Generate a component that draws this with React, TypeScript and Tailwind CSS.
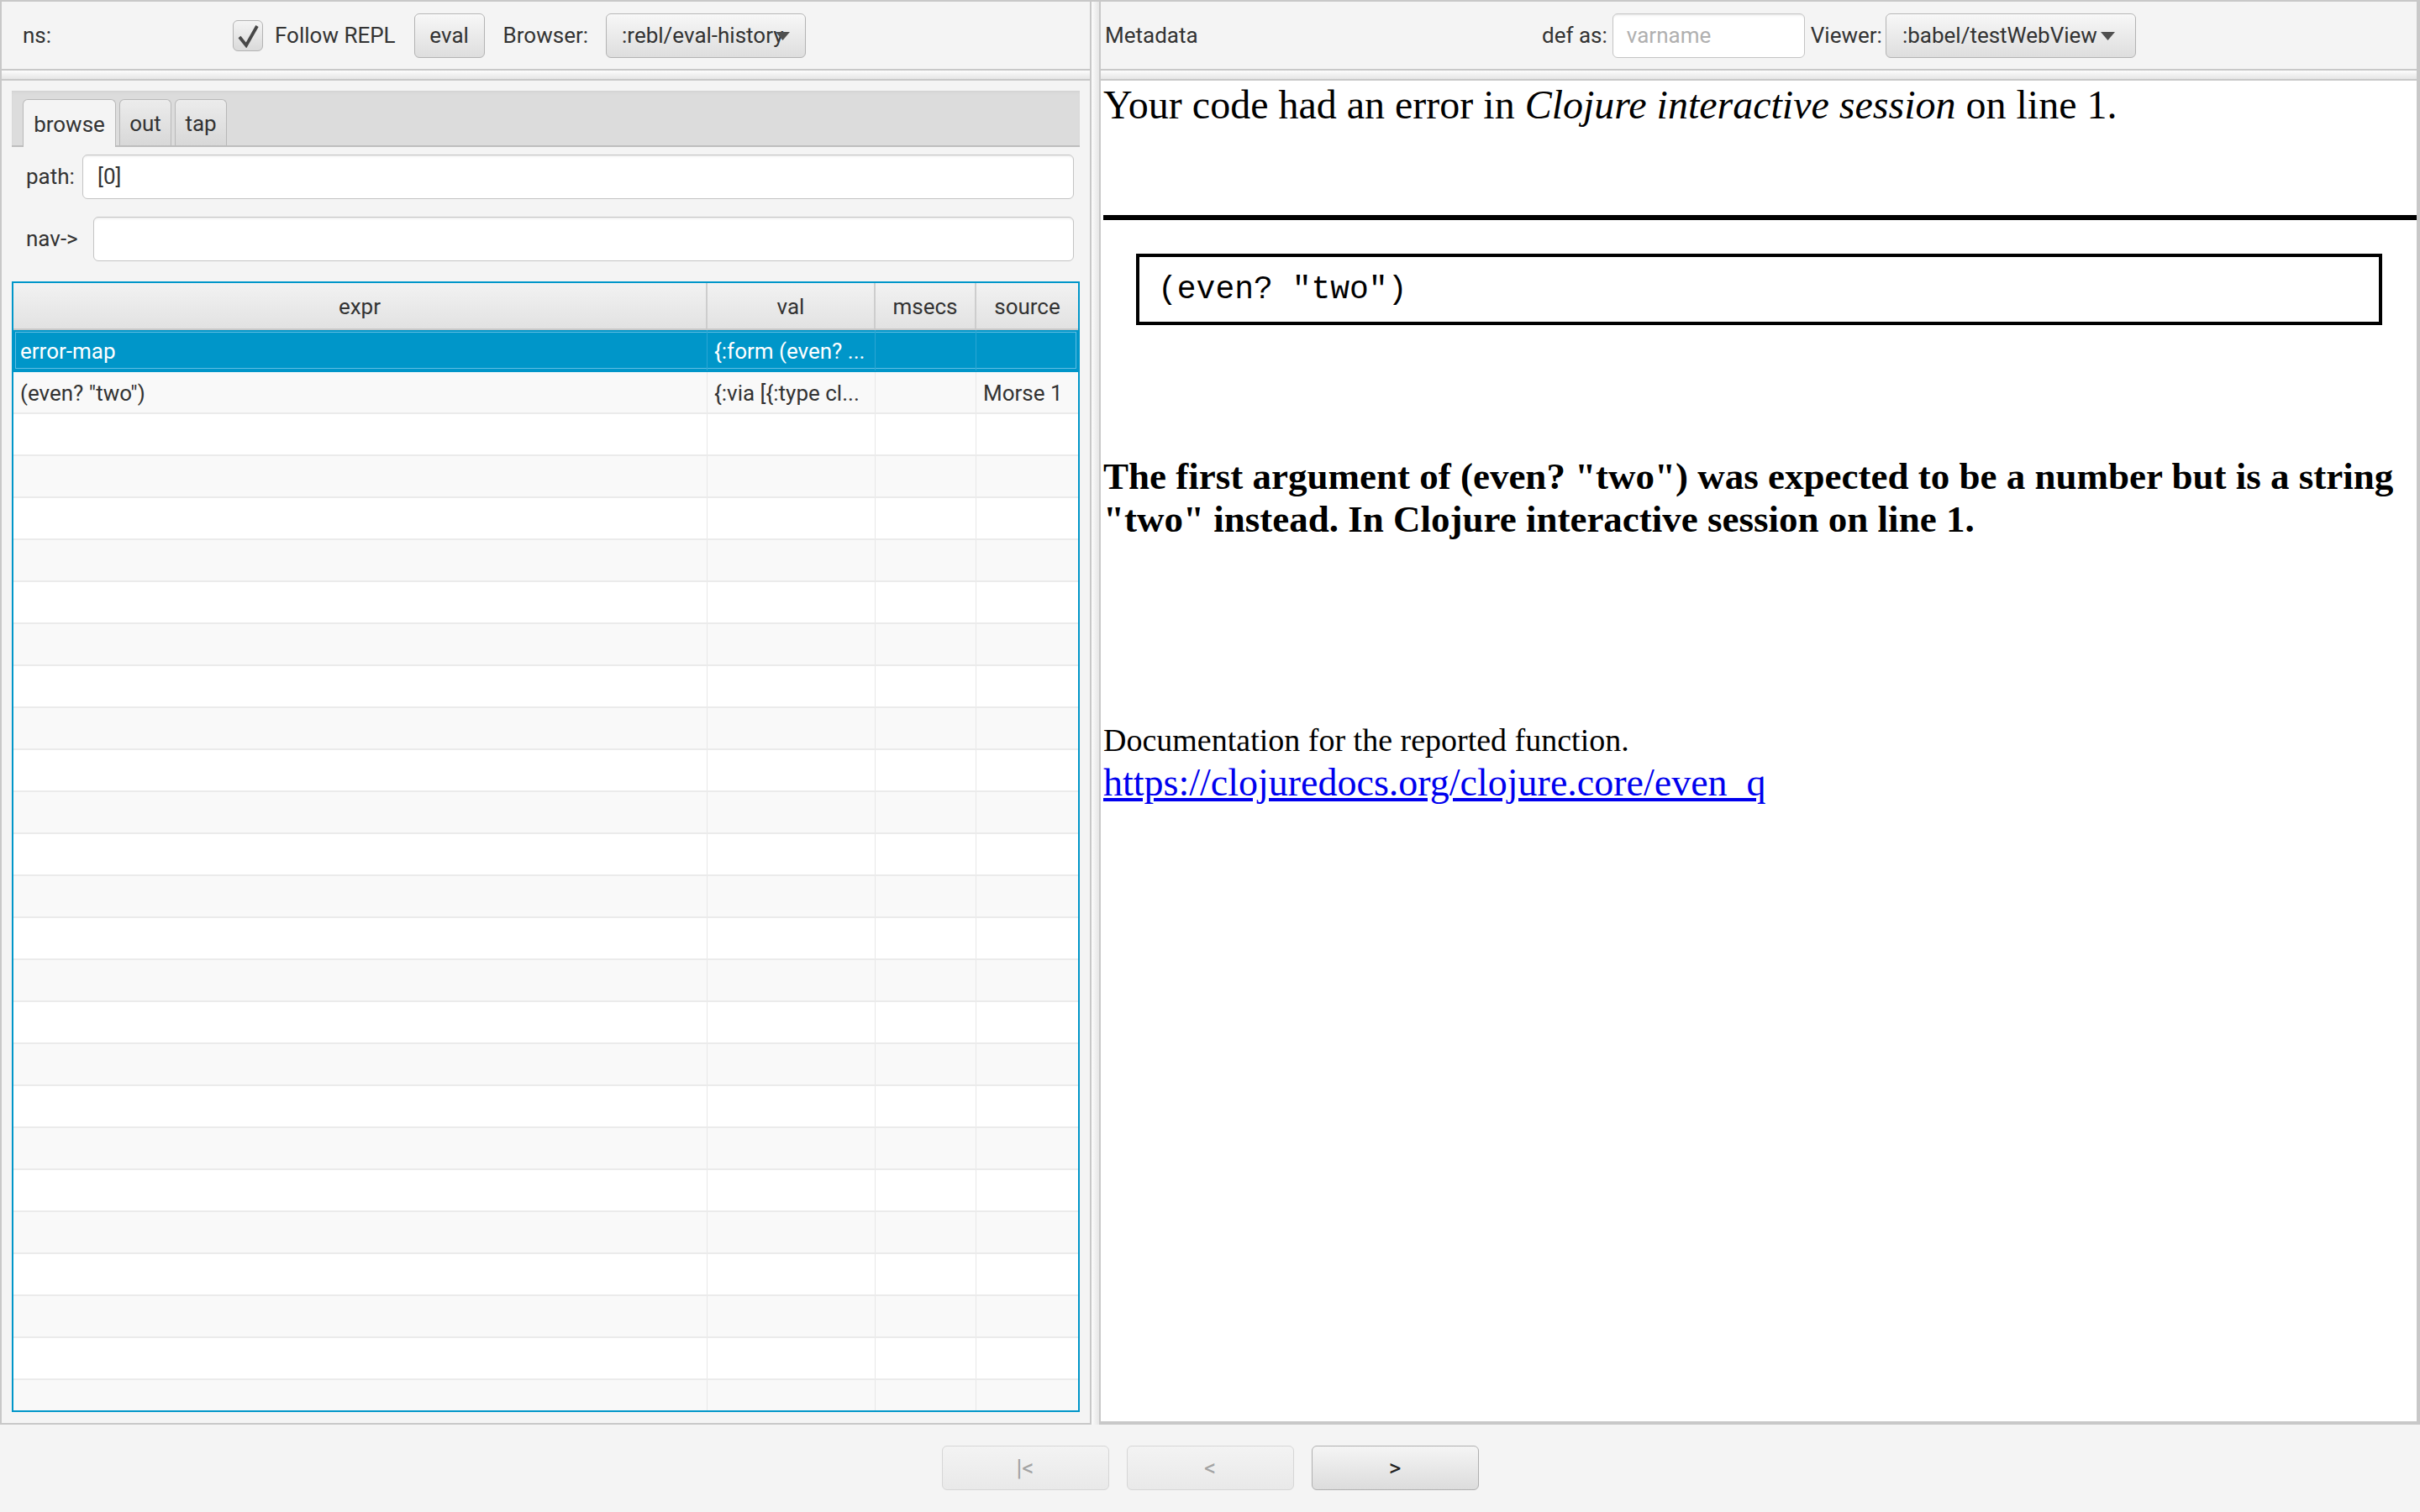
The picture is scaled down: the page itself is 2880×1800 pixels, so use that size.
import React from 'react';

const btnCls =
  'h-[53px] rounded-[6px] border-[1.5px] border-[#b3b3b3] bg-gradient-to-b from-[#f7f7f7] to-[#dedede] shadow-[inset_0_1px_0_#ffffff] flex items-center text-[#333]';

function Arrow() {
  return (
    <svg width="17" height="10" viewBox="0 0 17 10" className="block">
      <polygon points="0,0 17,0 8.5,10" fill="#505050" />
    </svg>
  );
}

function Toolbar() {
  return (
    <div className="h-[80px] flex items-center shrink-0 text-[26px]">
      <span className="pl-[25px] w-[275px]">ns:</span>
      <div className="w-[36px] h-[37px] rounded-[6px] border-[1.5px] border-[#b3b3b3] bg-gradient-to-b from-[#f4f4f4] to-[#dadada] flex items-center justify-center">
        <svg width="30" height="30" viewBox="0 0 30 30">
          <path d="M5 17 L13 27 L26 4" fill="none" stroke="#474747" strokeWidth="3.8" strokeLinejoin="miter" strokeLinecap="butt" />
        </svg>
      </div>
      <span className="ml-[14px]">Follow REPL</span>
      <div className={btnCls + ' ml-[22px] w-[84px] justify-center'}>eval</div>
      <span className="ml-[22px]">Browser:</span>
      <div className={btnCls + ' relative ml-[21px] w-[238px] pl-[18px] overflow-hidden whitespace-nowrap'}>
        <span>:rebl/eval-history</span>
        <span className="absolute right-[18px] top-[21px]">
          <Arrow />
        </span>
      </div>
    </div>
  );
}

function Strip() {
  return (
    <div className="h-[14px] shrink-0 border-y-2 border-[#c8c8c8] bg-gradient-to-b from-[#fcfcfc] to-[#e6e6e6]" />
  );
}

type Row = { expr: string; val: string; msecs: string; source: string };

const data: Row[] = [
  { expr: 'error-map', val: '{:form (even? ...', msecs: '', source: '' },
  { expr: '(even? "two")', val: '{:via [{:type cl...', msecs: '', source: 'Morse 1' },
];

const cols = 'grid grid-cols-[826px_200px_120px_1fr]';

function Table() {
  const rows: Row[] = [];
  for (let i = 0; i < 26; i++) {
    rows.push(data[i] ?? { expr: '', val: '', msecs: '', source: '' });
  }
  return (
    <div className="flex-1 min-h-0 border-2 border-[#0096c9] bg-white flex flex-col overflow-hidden">
      <div className={cols + ' h-[56px] shrink-0 border-b-2 border-[#c8c8c8] bg-gradient-to-b from-[#f2f2f2] to-[#e2e2e2]'}>
        {['expr', 'val', 'msecs', 'source'].map((h, i) => (
          <div
            key={h}
            className={
              'flex items-center justify-center pt-[2px] text-[26px] text-[#333] ' +
              (i < 3 ? 'border-r-2 border-[#cdcdcd]' : '')
            }
          >
            {h}
          </div>
        ))}
      </div>
      <div className="flex-1 min-h-0 overflow-hidden">
        {rows.map((r, i) => {
          const sel = i === 0;
          const bg = sel ? 'bg-[#0096c9] text-white shadow-[inset_0_0_0_2px_#0096c9,inset_0_0_0_3px_#5fbde3]' : i % 2 === 1 ? 'bg-[#f9f9f9] text-[#333]' : 'bg-white text-[#333]';
          const line = sel ? 'border-[#2aa6d4]' : 'border-[#e8e8e8]';
          return (
            <div key={i} className={cols + ' h-[50px] border-b-2 ' + (sel ? 'border-[#0096c9] ' : 'border-[#ebebeb] ') + bg}>
              <div className={'flex items-center pt-[2px] px-[8px] whitespace-nowrap overflow-hidden text-[26px] border-r ' + line}>{r.expr}</div>
              <div className={'flex items-center pt-[2px] px-[8px] whitespace-nowrap overflow-hidden text-[26px] border-r ' + line}>{r.val}</div>
              <div className={'flex items-center pt-[2px] px-[8px] whitespace-nowrap overflow-hidden text-[26px] border-r ' + line}>{r.msecs}</div>
              <div className="flex items-center pt-[2px] px-[8px] whitespace-nowrap overflow-hidden text-[26px]">{r.source}</div>
            </div>
          );
        })}
      </div>
    </div>
  );
}

function Input({ value, placeholder, className }: { value?: string; placeholder?: string; className?: string }) {
  return (
    <div
      className={
        'h-[53px] rounded-[6px] border-[1.5px] border-[#c4c4c4] bg-white shadow-[inset_0_3px_3px_-2px_#e6e6e6] flex items-center text-[26px] ' +
        (className ?? '')
      }
    >
      {value ? <span className="text-[#333]">{value}</span> : <span className="text-[#b0b0b0]">{placeholder}</span>}
    </div>
  );
}

function LeftPane() {
  return (
    <div className="w-[1295px] shrink-0 flex flex-col border-b-2 border-[#c8c8c8]">
      <Toolbar />
      <Strip />
      <div className="flex-1 min-h-0 flex flex-col pl-[12px] pr-[12px] pt-[12px] pb-[13px]">
        <div className="h-[67px] shrink-0 bg-[#dcdcdc] shadow-[inset_0_3px_4px_-2px_#cfcfcf] flex items-end pl-[13px] border-b-2 border-[#bdbdbd] text-[26px]">
          <div className="w-[111px] h-[57px] -mb-[2px] pt-[2px] rounded-t-[6px] border-[1.5px] border-b-0 border-[#b8b8b8] bg-[#f4f4f4] flex items-center justify-center">
            browse
          </div>
          <div className="ml-[4px] w-[62px] h-[55px] pt-[2px] rounded-t-[6px] border-[1.5px] border-b-0 border-[#b8b8b8] bg-gradient-to-b from-[#ececec] to-[#d8d8d8] flex items-center justify-center">
            out
          </div>
          <div className="ml-[4px] w-[62px] h-[55px] pt-[2px] rounded-t-[6px] border-[1.5px] border-b-0 border-[#b8b8b8] bg-gradient-to-b from-[#ececec] to-[#d8d8d8] flex items-center justify-center">
            tap
          </div>
        </div>
        <div className="mt-[9px] h-[53px] shrink-0 flex items-center pr-[7px] text-[26px]">
          <span className="pl-[17px] w-[84px]">path:</span>
          <Input value="[0]" className="flex-1 pl-[17px]" />
        </div>
        <div className="mt-[21px] h-[53px] shrink-0 flex items-center pr-[7px] text-[26px]">
          <span className="pl-[17px] w-[97px]">nav-&gt;</span>
          <Input className="flex-1" />
        </div>
        <div className="mt-[24px] flex-1 min-h-0 flex">
          <Table />
        </div>
      </div>
    </div>
  );
}

function RightPane() {
  return (
    <div className="flex-1 min-w-0 flex flex-col border-r-4 border-b-4 border-[#c8c8c8]">
      <div className="h-[80px] flex items-center shrink-0 text-[26px]">
        <span className="pl-[5px] w-[525px]">Metadata</span>
        <span>def as:</span>
        <Input placeholder="varname" className="ml-[6px] w-[229px] pl-[16px]" />
        <span className="ml-[7px]">Viewer:</span>
        <div className={btnCls + ' relative ml-[4px] w-[298px] pl-[19px] whitespace-nowrap overflow-hidden'}>
          <span>:babel/testWebView</span>
          <span className="absolute right-[24px] top-[21px]">
            <Arrow />
          </span>
        </div>
      </div>
      <Strip />
      <div className="flex-1 min-h-0 bg-white overflow-hidden pl-[3px] text-black [font-family:'Liberation_Serif',serif]">
        <p className="text-[48px] leading-[57px] whitespace-nowrap">
          Your code had an error in <i>Clojure interactive session</i> on line 1.
        </p>
        <div className="mt-[103px] h-[6px] bg-black" />
        <div className="mt-[40px] ml-[39px] mr-[41px] h-[85px] border-4 border-black flex items-center pl-[22px] text-[38px] [font-family:'Liberation_Mono',monospace]">
          (even? "two")
        </div>
        <p className="mt-[155px] text-[45px] leading-[51px] font-bold pr-[20px]">
          The first argument of (even? "two") was expected to be a number but is a string "two" instead. In Clojure interactive session on line 1.
        </p>
        <p className="mt-[216px] text-[38px] leading-[43px]">Documentation for the reported function.</p>
        <a className="block mt-[3px] text-[46px] leading-[52px] text-[#0000ee] underline w-max" href="#">
          https://clojuredocs.org/clojure.core/even_q
        </a>
      </div>
    </div>
  );
}

function NavBtn({ label, disabled }: { label: string; disabled?: boolean }) {
  return (
    <div
      className={
        'w-[199px] h-[53px] rounded-[6px] border-[1.5px] flex items-center justify-center text-[28px] ' +
        (disabled
          ? 'border-[#d6d6d6] bg-gradient-to-b from-[#f3f3f3] to-[#e9e9e9] text-[#a3a3a3]'
          : 'border-[#b0b0b0] bg-gradient-to-b from-[#f5f5f5] to-[#dcdcdc] text-[#222]')
      }
    >
      {label}
    </div>
  );
}

export default function App() {
  return (
    <div className="w-[2880px] h-[1800px] bg-[#f4f4f4] flex flex-col overflow-hidden text-[#333] [font-family:Roboto,'Liberation_Sans',sans-serif]">
      <div className="h-[1696px] shrink-0 flex border-t-2 border-l-2 border-[#c8c8c8]">
        <LeftPane />
        <div className="w-[13px] shrink-0 border-x-2 border-[#c8c8c8] bg-gradient-to-r from-[#fbfbfb] to-[#e6e6e6]" />
        <RightPane />
      </div>
      <div className="flex-1 flex justify-center pt-[25px] gap-[21px]">
        <NavBtn label="|<" disabled />
        <NavBtn label="<" disabled />
        <NavBtn label=">" />
      </div>
    </div>
  );
}
